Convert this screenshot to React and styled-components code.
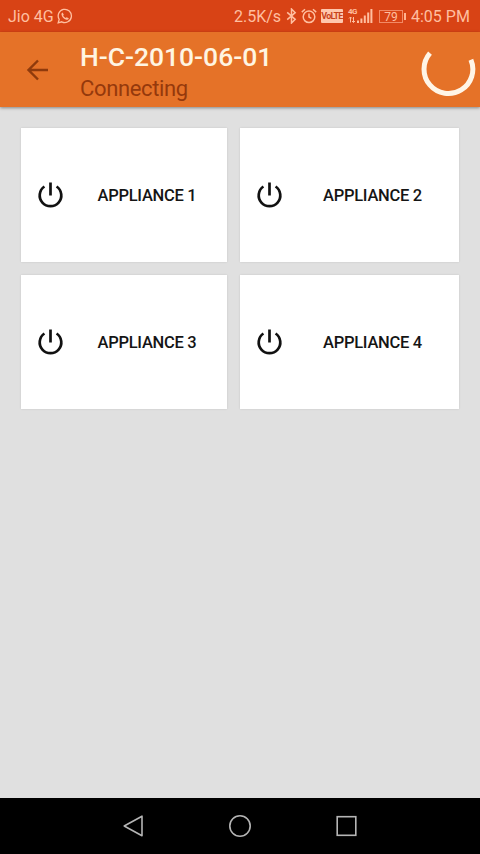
import React from 'react';
import styled, { createGlobalStyle } from 'styled-components';

const GlobalStyle = createGlobalStyle`
    body{
        margin:0;
        font-family: Roboto, sans-serif;
        background-color:#e0e0e0;
    }
`;

const Screen = styled.div`
    display:flex;
    flex-direction:column;
    width:480px;
    height:854px;
    overflow:hidden;
    background-color:#e0e0e0;
`;

const StatusBar = styled.div`
    display:flex;
    align-items:center;
    flex-shrink:0;
    height:32px;
    padding:0 11px 0 8px;
    background-color:#d84315;
    color:#ffbfa0;
    svg{
        display:block;
        flex-shrink:0;
    }
`;

const StatusText = styled.div`
    padding-top:2px;
    font-size:16px;
    line-height:30px;
    white-space:nowrap;
    width:${props => props.$width}px;
    letter-spacing:${props => props.$spacing || 0}px;
    margin-right:${props => props.$gap || 0}px;
`;

const StatusIcons = styled.div`
    display:flex;
    align-items:center;
    margin-left:auto;
`;

const VolteBadge = styled.div`
    width:22px;
    height:14px;
    margin:0 5px 0 4px;
    border-radius:1px;
    background-color:#ffc7ad;
    color:#c8431c;
    font-size:9px;
    font-weight:700;
    line-height:14px;
    text-align:center;
    letter-spacing:-0.8px;
`;

const Signal = styled.div`
    display:flex;
    align-items:flex-end;
    width:24px;
    height:14px;
    margin-right:7px;
`;

const Network = styled.div`
    display:flex;
    flex-direction:column;
    width:9px;
    height:15px;
    font-size:8px;
    font-weight:700;
    line-height:8px;
    letter-spacing:-0.6px;
`;

const Battery = styled.div`
    display:flex;
    align-items:center;
    margin-right:5px;
    &::after{
        content:'';
        width:2px;
        height:7px;
        margin-left:1px;
        background-color:#ffb391;
    }
`;

const BatteryLevel = styled.div`
    box-sizing:border-box;
    width:24px;
    height:13px;
    border:1px solid #f28a66;
    font-size:12px;
    line-height:12px;
    text-align:center;
`;

const Toolbar = styled.div`
    display:flex;
    align-items:center;
    position:relative;
    flex-shrink:0;
    box-sizing:border-box;
    height:75px;
    padding:0 4.5px 0 25px;
    background-color:#e57228;
    box-shadow:0 1px 3px rgba(0, 0, 0, 0.4);
    svg{
        display:block;
    }
`;

const TitleBox = styled.div`
    flex:1;
    padding:7px 0 0 30px;
    white-space:nowrap;
`;

const Title = styled.div`
    font-size:26.5px;
    font-weight:500;
    line-height:32px;
    letter-spacing:-0.03px;
    color:#fff5e2;
`;

const Subtitle = styled.div`
    font-size:22px;
    line-height:32px;
    letter-spacing:-0.36px;
    color:#95390c;
`;

const CardGrid = styled.div`
    display:grid;
    grid-template-columns:206px 219px;
    grid-auto-rows:134px;
    gap:13px;
    flex:1;
    align-content:start;
    padding:21px 21px 0;
`;

const Card = styled.div`
    display:flex;
    align-items:center;
    background-color:#fff;
    box-shadow:0 0 2px rgba(0, 0, 0, 0.12);
    svg{
        display:block;
        margin-left:16px;
    }
`;

const CardLabel = styled.div`
    flex:1;
    padding:2px 0 0 3px;
    color:#151515;
    font-size:16.5px;
    font-weight:500;
    line-height:20px;
    letter-spacing:-0.28px;
    text-align:center;
    white-space:nowrap;
`;

const NavBar = styled.div`
    display:flex;
    align-items:center;
    justify-content:space-between;
    flex-shrink:0;
    box-sizing:border-box;
    height:56px;
    padding:0 121px;
    background-color:#000;
`;

const WhatsappIcon = () => (
    <svg width="17" height="16" viewBox="-1 0 17 16" fill="none" stroke="currentColor">
        <path d="M1.2 14.8 2.2 11.4A6.6 6.6 0 1 1 4.8 13.8Z" strokeWidth="1.3" />
        <path d="M5.6 4.4 6.8 6.8 6.1 7.8Q7 9.4 8.7 10L9.6 9.2 11.8 10.2Q11.4 12.2 9.4 11.8 5.2 10.7 4.4 6.3 4.4 4.8 5.6 4.4Z" fill="currentColor" stroke="none" />
    </svg>
);

const BluetoothIcon = () => (
    <svg width="11" height="16" viewBox="0 0 11 16" fill="none" stroke="currentColor" strokeWidth="1.5">
        <path d="M1.2 4.4 9.2 11.4 5.5 15V1L9.2 4.6 1.2 11.6" />
    </svg>
);

const AlarmIcon = () => (
    <svg width="16" height="16" viewBox="0 0 16 16" fill="none" stroke="currentColor" strokeWidth="1.5">
        <circle cx="8" cy="8.8" r="5.8" />
        <path d="M.8 4.1 4 1.2M15.2 4.1 12 1.2M8 5.4V9L10.4 10.4" />
    </svg>
);

const SignalBars = () => (
    <svg width="16" height="14" viewBox="0 0 16 14" fill="currentColor">
        <path d="M0 11.5h2V14H0zM3.4 9.5h2V14h-2zM6.8 6.5h2V14h-2zM10.2 3.5h2V14h-2zM13.4 0h2v14h-2z" />
    </svg>
);

const DataArrows = () => (
    <svg width="8" height="7" viewBox="0 0 8 7" fill="none" stroke="currentColor" strokeWidth="1">
        <path d="M2.5 6.5V1M1 2.5 2.5 1 4 2.5M5.5 1v5.5M4 5 5.5 6.5 7 5" />
    </svg>
);

const BackArrow = () => (
    <svg width="25" height="24" viewBox="0 0 25 24" fill="none" stroke="#8f3a0c" strokeWidth="2.4">
        <path d="M23 12H3.5M13 2.5 3.5 12 13 21.5" />
    </svg>
);

const Spinner = () => (
    <svg width="56" height="56" viewBox="0 0 56 56" fill="none">
        <path d="M10 11.2A24.4 24.4 0 1 0 50.9 17.7" stroke="#fff5e6" strokeWidth="5" />
    </svg>
);

const PowerIcon = () => (
    <svg width="27" height="28" viewBox="0 0 27 28" fill="none" stroke="#111" strokeWidth="2.7">
        <path d="M13.5 1.5v13M7.4 5.5A10.8 10.8 0 1 0 19.6 5.5" />
    </svg>
);

const appliances = ['APPLIANCE 1', 'APPLIANCE 2', 'APPLIANCE 3', 'APPLIANCE 4'];

const App = () => {
    return (
        <Screen>
            <GlobalStyle />
            <StatusBar>
                <StatusText $width={47.5}>Jio 4G</StatusText>
                <WhatsappIcon />
                <StatusIcons>
                    <StatusText $width={48} $gap={4}>2.5K/s</StatusText>
                    <BluetoothIcon />
                    <StatusText $width={4} />
                    <AlarmIcon />
                    <VolteBadge>VoLTE</VolteBadge>
                    <Signal>
                        <Network>
                            4G
                            <DataArrows />
                        </Network>
                        <SignalBars />
                    </Signal>
                    <Battery>
                        <BatteryLevel>79</BatteryLevel>
                    </Battery>
                    <StatusText $width={58}>4:05 PM</StatusText>
                </StatusIcons>
            </StatusBar>

            <Toolbar>
                <BackArrow />
                <TitleBox>
                    <Title>H-C-2010-06-01</Title>
                    <Subtitle>Connecting</Subtitle>
                </TitleBox>
                <Spinner />
            </Toolbar>

            <CardGrid>
                {appliances.map(name => (
                    <Card key={name}>
                        <PowerIcon />
                        <CardLabel>{name}</CardLabel>
                    </Card>
                ))}
            </CardGrid>

            <NavBar>
                <svg width="24" height="24" viewBox="0 0 24 24" fill="none" stroke="#b5b5b5" strokeWidth="1.6">
                    <path d="M21 2.2V21.8L3.2 12Z" strokeLinejoin="round" />
                </svg>
                <svg width="24" height="24" viewBox="0 0 24 24" fill="none" stroke="#b5b5b5" strokeWidth="1.6">
                    <circle cx="12" cy="12" r="10.2" />
                </svg>
                <svg width="24" height="24" viewBox="0 0 24 24" fill="none" stroke="#b5b5b5" strokeWidth="1.6">
                    <rect x="2.2" y="2.7" width="18.6" height="18.6" />
                </svg>
            </NavBar>
        </Screen>
    );
};

export default App;
